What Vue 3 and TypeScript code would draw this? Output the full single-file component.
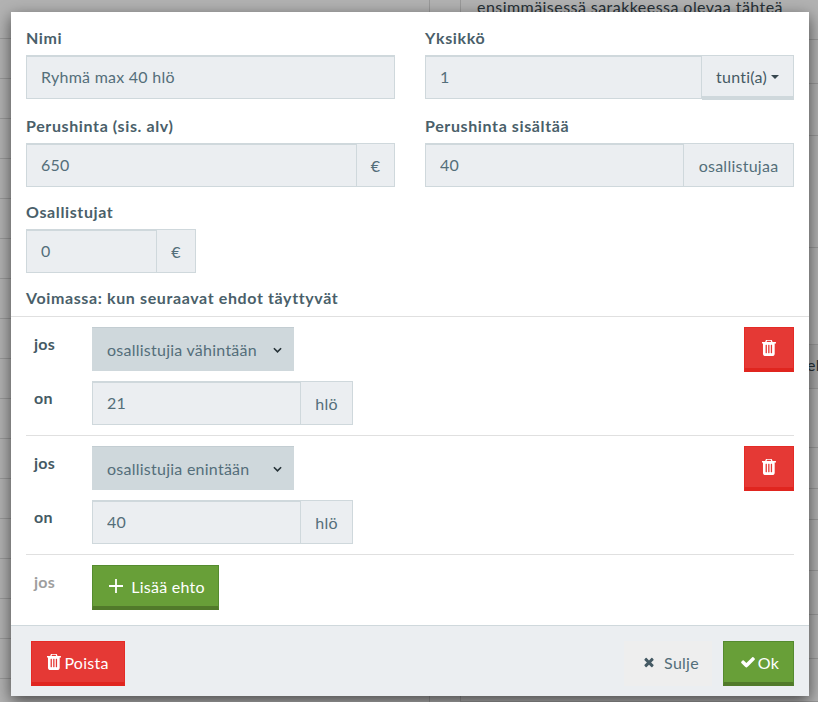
<script setup lang="ts">
const trash = 'M512 1248v-704q0-14-9-23t-23-9h-64q-14 0-23 9t-9 23v704q0 14 9 23t23 9h64q14 0 23-9t9-23zm256 0v-704q0-14-9-23t-23-9h-64q-14 0-23 9t-9 23v704q0 14 9 23t23 9h64q14 0 23-9t9-23zm256 0v-704q0-14-9-23t-23-9h-64q-14 0-23 9t-9 23v704q0 14 9 23t23 9h64q14 0 23-9t9-23zm-544-992h448l-48-117q-7-9-17-11h-317q-10 2-17 11zm928 32v64q0 14-9 23t-23 9h-96v948q0 83-47 143.500t-113 60.500h-832q-66 0-113-58.500t-47-141.500v-952h-96q-14 0-23-9t-9-23v-64q0-14 9-23t23-9h309l70-167q15-37 54-63t79-26h320q40 0 79 26t54 63l70 167h309q14 0 23 9t9 23z'
const check = 'M1671 566q0 40-28 68l-724 724-136 136q-28 28-68 28t-68-28l-136-136-362-362q-28-28-28-68t28-68l136-136q28-28 68-28t68 28l294 295 656-657q28-28 68-28t68 28l136 136q28 28 28 68z'
const times = 'M1490 1322q0 40-28 68l-136 136q-28 28-68 28t-68-28l-294-294-294 294q-28 28-68 28t-68-28l-136-136q-28-28-28-68t28-68l294-294-294-294q-28-28-28-68t28-68l136-136q28-28 68-28t68 28l294 294 294-294q28-28 68-28t68 28l136 136q28 28 28 68t-28 68l-294 294 294 294q28 28 28 68z'
const conditions = [
  { field: 'osallistujia vähintään', value: '21' },
  { field: 'osallistujia enintään', value: '40' },
]
const leftRows = Array.from({ length: 18 }, (_, i) => (i === 0 ? 39 : 40))
const rightRows = [40, 44, 52, 112, 97, 44, 59, 41, 31, 51, 44, 44, 43]
</script>

<template>
  <div class="page">
    <div class="bg">
      <div class="bg-left">
        <div v-for="(h, i) in leftRows" :key="i" class="bg-row" :style="{ height: h + 'px' }"></div>
      </div>
      <div class="bg-narrow"></div>
      <div class="bg-right">
        <div class="bg-top">ensimmäisessä sarakkeessa olevaa tähteä</div>
        <div
          v-for="(h, i) in rightRows"
          :key="i"
          class="bg-row"
          :class="{ band: i === 5 }"
          :style="{ height: h + 'px' }"
        >
          <span v-if="i === 5" class="bg-side">el</span>
        </div>
      </div>
    </div>
    <div class="backdrop"></div>
    <div class="modal">
      <div class="body">
        <div class="grid">
          <div class="field">
            <label>Nimi</label>
            <div class="group"><input class="ctl" value="Ryhmä max 40 hlö" readonly /></div>
          </div>
          <div class="field">
            <label>Yksikkö</label>
            <div class="group">
              <input class="ctl" value="1" readonly />
              <span class="dd">tunti(a)<i class="caret"></i></span>
            </div>
          </div>
          <div class="field">
            <label>Perushinta (sis. alv)</label>
            <div class="group"><input class="ctl" value="650" readonly /><span class="addon">€</span></div>
          </div>
          <div class="field">
            <label>Perushinta sisältää</label>
            <div class="group"><input class="ctl" value="40" readonly /><span class="addon wide">osallistujaa</span></div>
          </div>
          <div class="field">
            <label>Osallistujat</label>
            <div class="group small"><input class="ctl" value="0" readonly /><span class="addon">€</span></div>
          </div>
        </div>
        <div class="title">Voimassa: kun seuraavat ehdot täyttyvät</div>
      </div>

      <div class="conds">
        <div v-for="(c, i) in conditions" :key="i" class="cond">
          <div class="cond-main">
            <div class="line">
              <span class="word">jos</span>
              <div class="select-wrap">
                <span class="select-text">{{ c.field }}</span>
                <svg class="chev" viewBox="0 0 10 6" width="9" height="6"><path d="M1 1l4 4 4-4" fill="none" stroke="#263238" stroke-width="1.8" /></svg>
              </div>
            </div>
            <div class="line">
              <span class="word">on</span>
              <div class="group cond-group"><input class="ctl" :value="c.value" readonly /><span class="addon">hlö</span></div>
            </div>
          </div>
          <button class="btn red del" type="button" aria-label="Poista">
            <svg viewBox="32 64 1376 1472" width="14" height="16" preserveAspectRatio="none"><path :d="trash" fill="#fff" /></svg>
          </button>
        </div>
        <div class="add-row">
          <span class="word muted">jos</span>
          <button class="btn green add" type="button">
            <svg viewBox="0 0 14 14" width="14" height="14"><path d="M7 0v14M0 7h14" stroke="#fff" stroke-width="1.8" fill="none" /></svg>
            <span>Lisää ehto</span>
          </button>
        </div>
      </div>

      <div class="footer">
        <button class="btn red poista" type="button">
          <svg viewBox="32 64 1376 1472" width="14" height="16" preserveAspectRatio="none"><path :d="trash" fill="#fff" /></svg>
          <span>Poista</span>
        </button>
        <div class="right">
          <button class="btn sulje" type="button">
            <svg viewBox="0 0 1792 1792" width="14" height="14"><path :d="times" fill="#455a64" /></svg>
            <span>Sulje</span>
          </button>
          <button class="btn green ok" type="button">
            <svg viewBox="0 0 1792 1792" width="16" height="16"><path :d="check" fill="#fff" /></svg>
            <span>Ok</span>
          </button>
        </div>
      </div>
    </div>
  </div>
</template>

<style>
html, body { margin: 0; padding: 0; overflow: hidden; }
</style>

<style scoped>
.page {
  position: relative;
  width: 818px;
  height: 702px;
  overflow: hidden;
  background: #fff;
  font-family: "Lato", "Noto Sans", sans-serif;
  font-size: 16px;
  letter-spacing: 0.25px;
  color: #546e7a;
}
.bg { display: flex; height: 702px; overflow: hidden; }
.bg-left { width: 430px; border-right: 1px solid #dcdcdc; box-sizing: border-box; }
.bg-narrow { width: 31px; border-right: 1px solid #dcdcdc; box-sizing: border-box; }
.bg-right { position: relative; flex: 1; min-width: 0; }
.bg-top {
  position: absolute;
  left: 16px;
  top: -3px;
  letter-spacing: 0.45px;
  color: #37474f;
  white-space: nowrap;
}
.bg-side {
  position: absolute;
  left: 346px;
  margin-top: 10px;
  color: #37474f;
  white-space: nowrap;
}
.bg-row { box-sizing: border-box; border-bottom: 1px solid #dcdcdc; }
.bg-row.band { background: #f2f2f2; }
.backdrop { position: absolute; inset: 0; background: rgba(0, 0, 0, 0.3); }
.modal {
  position: absolute;
  left: 11px;
  top: 12px;
  width: 798px;
  height: 684px;
  background: #fff;
  box-shadow: 0 5px 15px rgba(0, 0, 0, 0.6);
  display: flex;
  flex-direction: column;
}
.body { padding: 15px 15px 0; }
.grid {
  display: grid;
  grid-template-columns: 369px 369px;
  column-gap: 30px;
  row-gap: 15px;
}
.field:nth-child(-n + 2) { margin-bottom: 1px; }
.field:nth-child(n + 3) .group { margin-bottom: -1px; }
label {
  display: block;
  font-weight: 700;
  font-size: 16px;
  line-height: 22px;
  letter-spacing: 0.62px;
  color: #4a5f6a;
  margin-bottom: 6px;
}
.group {
  display: flex;
  height: 44px;
  box-sizing: border-box;
}
.group.small { width: 170px; }
.ctl {
  flex: 1;
  min-width: 0;
  box-sizing: border-box;
  height: 44px;
  border: 1px solid #cfd8dc;
  border-top-width: 2px;
  background: #ebeef1;
  padding: 0 14px 2px;
  font: inherit;
  letter-spacing: inherit;
  color: #546e7a;
  outline: none;
}
.addon {
  display: flex;
  align-items: center;
  justify-content: center;
  box-sizing: border-box;
  flex: none;
  width: 38px;
  height: 44px;
  border: 1px solid #cfd8dc;
  border-left: 0;
  background: #ebeef1;
  color: #546e7a;
}
.group.small .addon { width: 39px; }
.addon.wide { width: 110px; }
.dd {
  display: flex;
  align-items: center;
  justify-content: center;
  box-sizing: border-box;
  flex: none;
  width: 92px;
  height: 45px;
  background: #ebeef1;
  border: 1px solid #cfd8dc;
  border-left: 0;
  border-bottom: 4px solid #cfd8dc;
  color: #455a64;
}
.caret {
  display: inline-block;
  margin-left: 4px;
  margin-top: 2px;
  border-top: 4px solid #37474f;
  border-left: 4px solid transparent;
  border-right: 4px solid transparent;
}
.title {
  margin-top: 15px;
  font-weight: 700;
  line-height: 22px;
  letter-spacing: 0.62px;
  color: #4a5f6a;
}
.conds {
  flex: 1;
  display: flex;
  flex-direction: column;
  margin-top: 7px;
  padding: 0 15px;
  border-top: 1px solid #e0e0e0;
}
.cond {
  display: flex;
  justify-content: space-between;
  align-items: flex-start;
  padding-top: 10px;
  height: 119px;
  flex: none;
  box-sizing: border-box;
  border-bottom: 1px solid #e0e0e0;
}
.cond-main { display: flex; flex-direction: column; gap: 10px; }
.line { display: flex; align-items: flex-start; }
.word {
  width: 66px;
  padding-left: 8px;
  box-sizing: border-box;
  font-weight: 700;
  line-height: 22px;
  color: #455a64;
  padding-top: 6px;
}
.word.muted { color: #9e9e9e; }
.select-wrap {
  display: flex;
  align-items: center;
  justify-content: space-between;
  box-sizing: border-box;
  width: 202px;
  height: 44px;
  padding: 0 12px 0 15px;
  background: #cfd8dc;
  border-top: 1px solid #c3cdd2;
  color: #546e7a;
}
.cond-group { width: 261px; }
.cond-group .addon { width: 52px; }
.btn {
  box-sizing: border-box;
  display: inline-flex;
  align-items: center;
  justify-content: center;
  height: 45px;
  border: 1px solid transparent;
  border-bottom-width: 4px;
  font: inherit;
  letter-spacing: inherit;
  padding: 0;
  color: #fff;
}
.red { background: #e53935; border-color: #e52b26; border-bottom-color: #e0251f; }
.green { background: #689f38; border-color: #558b2f; border-bottom-color: #517a2a; }
.del { width: 50px; }
.add-row { display: flex; align-items: flex-start; padding-top: 10px; }
.add { width: 127px; gap: 8px; padding-left: 3px; }
.footer {
  height: 71px;
  flex: none;
  box-sizing: border-box;
  background: #ebeef1;
  border-top: 1px solid #cfd8dc;
  padding: 15px 15px 10px 20px;
  display: flex;
  justify-content: space-between;
  align-items: flex-start;
}
.right { display: flex; gap: 11px; }
.poista { width: 94px; gap: 3px; }
.sulje { width: 88px; gap: 8px; padding-left: 5px; background: #eeeeee; color: #546e7a; }
.ok { width: 71px; gap: 2px; padding-left: 2px; }
</style>
